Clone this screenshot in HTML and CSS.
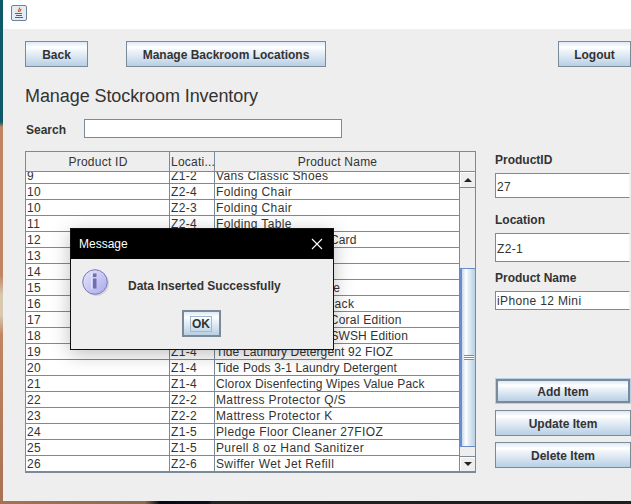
FILE: index.html
```html
<!DOCTYPE html>
<html lang="en">
<head>
<meta charset="utf-8">
<title>Manage Stockroom Inventory</title>
<link rel="stylesheet" href="styles.css">
</head>
<body>
<div class="window">
  <div class="titlebar">
    <svg class="java-icon" width="16" height="16" viewBox="0 0 16 16">
      <rect x="0.5" y="0.5" width="15" height="15" rx="1.5" fill="#e4ebf3" stroke="#6f8296"/>
      <path d="M8.500 2.500c1 1.500-2 2.500-1 4.500M10 4c0 1-1.500 1.500-1 3" fill="none" stroke="#d9541e" stroke-width="1.200"/>
      <path d="M4 8.500h7M5 10.500h6M4 12.500h8" stroke="#3d6a96" stroke-width="1"/>
    </svg>
  </div>
  <div class="content">
    <div class="topbar">
      <button class="btn btn-back">Back</button>
      <button class="btn btn-manage">Manage Backroom Locations</button>
      <button class="btn btn-logout">Logout</button>
    </div>
    <h1 class="heading">Manage Stockroom Inventory</h1>
    <div class="search">
      <label class="label search-label">Search</label>
      <div class="field search-field"></div>
    </div>
    <div class="workspace">
      <div class="table">
        <div class="table-main">
          <div class="thead">
            <div class="th col-id">Product ID</div>
            <div class="th col-loc">Locati...</div>
            <div class="th col-name">Product Name</div>
          </div>
          <div class="tbody">
            <div class="rows">
              <div class="row"><span class="col-id">9</span><span class="col-loc">Z1-2</span><span class="col-name">Vans Classic Shoes</span></div>
              <div class="row"><span class="col-id">10</span><span class="col-loc">Z2-4</span><span class="col-name">Folding Chair</span></div>
              <div class="row"><span class="col-id">10</span><span class="col-loc">Z2-3</span><span class="col-name">Folding Chair</span></div>
              <div class="row"><span class="col-id">11</span><span class="col-loc">Z2-4</span><span class="col-name">Folding Table</span></div>
              <div class="row"><span class="col-id">12</span><span class="col-loc">Z1-1</span><span class="col-name tight">Nintendo eShop Gift Card</span></div>
              <div class="row"><span class="col-id">13</span><span class="col-loc">Z1-1</span><span class="col-name">Nintendo Switch</span></div>
              <div class="row"><span class="col-id">14</span><span class="col-loc">Z1-1</span><span class="col-name">Nintendo Switch Lite</span></div>
              <div class="row"><span class="col-id">15</span><span class="col-loc">Z1-1</span><span class="col-name">Switch Lite Blue Case</span></div>
              <div class="row"><span class="col-id">16</span><span class="col-loc">Z1-1</span><span class="col-name">Joy-Con Controller Pack</span></div>
              <div class="row"><span class="col-id">17</span><span class="col-loc">Z1-1</span><span class="col-name snug">Switch Lite Console Coral Edition</span></div>
              <div class="row"><span class="col-id">18</span><span class="col-loc">Z1-1</span><span class="col-name tight">Switch Go Pokemon SWSH Edition</span></div>
              <div class="row"><span class="col-id">19</span><span class="col-loc">Z1-4</span><span class="col-name tight">Tide Laundry Detergent 92 FIOZ</span></div>
              <div class="row"><span class="col-id">20</span><span class="col-loc">Z1-4</span><span class="col-name tight">Tide Pods 3-1 Laundry Detergent</span></div>
              <div class="row"><span class="col-id">21</span><span class="col-loc">Z1-4</span><span class="col-name tight">Clorox Disenfecting Wipes Value Pack</span></div>
              <div class="row"><span class="col-id">22</span><span class="col-loc">Z2-2</span><span class="col-name">Mattress Protector Q/S</span></div>
              <div class="row"><span class="col-id">23</span><span class="col-loc">Z2-2</span><span class="col-name">Mattress Protector K</span></div>
              <div class="row"><span class="col-id">24</span><span class="col-loc">Z1-5</span><span class="col-name">Pledge Floor Cleaner 27FIOZ</span></div>
              <div class="row"><span class="col-id">25</span><span class="col-loc">Z1-5</span><span class="col-name">Purell 8 oz Hand Sanitizer</span></div>
              <div class="row"><span class="col-id">26</span><span class="col-loc">Z2-6</span><span class="col-name">Swiffer Wet Jet Refill</span></div>
            </div>
          </div>
        </div>
        <div class="scrollbar">
          <div class="scroll-corner"></div>
          <div class="scroll-btn"><span class="arrow-up"></span></div>
          <div class="scroll-track">
            <div class="scroll-thumb"><span class="grip"></span></div>
          </div>
          <div class="scroll-btn scroll-btn-down"><span class="arrow-down"></span></div>
        </div>
      </div>
      <div class="side">
        <label class="label side-label-id">ProductID</label>
        <div class="field field-id">27</div>
        <label class="label side-label-loc">Location</label>
        <div class="field field-loc">Z2-1</div>
        <label class="label side-label-name">Product Name</label>
        <div class="field field-name">iPhone 12 Mini</div>
        <button class="btn side-btn btn-add">Add Item</button>
        <button class="btn side-btn">Update Item</button>
        <button class="btn side-btn">Delete Item</button>
      </div>
    </div>
  </div>
</div>
<div class="taskbar"></div>
<div class="dialog">
  <div class="dialog-title">
    <span>Message</span>
    <svg class="dialog-close" width="12" height="12" viewBox="0 0 12 12">
      <path d="M1 1l10 10M11 1L1 11" stroke="#fff" stroke-width="1.100" fill="none"/>
    </svg>
  </div>
  <div class="dialog-body">
    <div class="dialog-msg">
      <svg class="info-icon" width="29" height="29" viewBox="0 0 29 29">
        <defs>
          <linearGradient id="infoFill" x1="0" y1="0" x2="1" y2="1">
            <stop offset="0" stop-color="#e6e6fb"/>
            <stop offset="1" stop-color="#a9a9ea"/>
          </linearGradient>
        </defs>
        <circle cx="14.500" cy="14.500" r="12.500" fill="#b9b9c9" opacity="0.500"/>
        <circle cx="13" cy="13" r="12.300" fill="url(#infoFill)" stroke="#7a7ab8" stroke-width="1"/>
        <rect x="10.500" y="4.500" width="4" height="3.500" fill="#6e6eb4"/>
        <rect x="10.500" y="9.500" width="4" height="10" fill="#6e6eb4"/>
        <path d="M10 4v4M10 9v11" stroke="#fff" stroke-width="1"/>
      </svg>
      <span class="dialog-text">Data Inserted Successfully</span>
    </div>
    <button class="btn btn-ok"><span class="ok-focus">OK</span></button>
  </div>
</div>
</body>
</html>
```
FILE: styles.css
```css
* { box-sizing: border-box; }
html, body { margin: 0; padding: 0; }
body {
  width: 631px;
  height: 504px;
  overflow: hidden;
  position: relative;
  font-family: "Liberation Sans", Arial, sans-serif;
  color: #333;
  background: linear-gradient(to bottom, #0f5a68 0, #0f5a68 122px, #c08562 127px, #c08562 275px, #d8c8b0 295px, #d8c8b0 315px, #c08562 335px, #a97252 100%);
}
.window { margin-left: 3px; width: 628px; height: 501px; background: #eee; }
.taskbar {
  height: 3px;
  background: linear-gradient(to right, #a8714f 0, #8f6a4c 145px, #06090f 160px, #0a1018 208px, #222 212px, #1d1d1d 100%);
}
.titlebar { height: 29px; background: #fff; padding: 5px 0 0 8px; }
.java-icon { display: block; }
.content { padding: 12px 0 0 22px; }
.topbar { display: flex; height: 26px; }
.btn {
  font: bold 12px "Liberation Sans", Arial, sans-serif;
  color: #333;
  border: 1px solid #7a8a99;
  background: linear-gradient(to bottom, #dde8f3 0, #fff 22%, #f0f5fa 35%, #b8cfe5 100%);
  padding: 2px 0 0;
  margin: 0;
}
.btn-back { width: 63px; }
.btn-manage { width: 200px; margin-left: 38px; }
.btn-logout { width: 73px; margin-left: auto; }
.heading { font-size: 18px; font-weight: normal; line-height: 22px; margin: 18px 0 0; letter-spacing: -0.08px; }
.search { display: flex; align-items: center; margin-top: 12px; height: 19px; }
.label { font-size: 12px; font-weight: bold; line-height: 14px; display: block; }
.search-label { width: 59px; padding-left: 1px; margin-top: 2px; }
.field {
  background: #fff;
  border: 1px solid #7a8a99;
  border-right-color: #f4f4f4;
  font-size: 12px;
  letter-spacing: 0.03em;
  display: flex;
  align-items: center;
  padding-left: 1px;
  width: 135px;
}
.search-field { width: 258px; height: 19px; border-right-color: #7a8a99; box-shadow: inset 1px 1px 0 #fff; }
.workspace { display: flex; margin-top: 13px; }
.table { display: flex; width: 451px; height: 322px; border: 1px solid #7a8a99; border-right: 0; border-bottom-width: 2px; }
.table-main { width: 434px; display: flex; flex-direction: column; border-right: 1px solid #7a8a99; }
.thead { display: flex; height: 20px; border-bottom: 1px solid #7a8a99; flex: none; }
.th { font-size: 12px; line-height: 20px; text-align: center; letter-spacing: 0.02em; padding-left: 3px; }
.col-id { width: 144px; flex: none; border-right: 1px solid #7a8a99; padding-left: 1px; }
.col-loc { width: 45px; flex: none; border-right: 1px solid #7a8a99; padding-left: 1px; white-space: nowrap; }
.col-name { flex: 1; padding-left: 1px; white-space: nowrap; overflow: hidden; }
.row .tight { letter-spacing: 0.13px; }
.row .snug { letter-spacing: 0.25px; }
.tbody { flex: 1; overflow: hidden; background: #fff; }
.rows { margin-top: -4px; }
.row { display: flex; height: 16px; border-bottom: 1px solid #7a8a99; font-size: 12px; line-height: 16px; letter-spacing: 0.03em; }
.scrollbar { width: 16px; display: flex; flex-direction: column; border-right: 1px solid #7a8a99; }
.scroll-corner { height: 20px; border-bottom: 1px solid #7a8a99; flex: none; }
.scroll-btn { height: 16px; flex: none; display: flex; align-items: center; justify-content: center; background: #eee; box-shadow: inset 1px 1px 0 #fff; border-bottom: 1px solid #7a8a99; }
.scroll-btn-down { height: 15px; border-top: 1px solid #7a8a99; border-bottom: 0; }
.arrow-up { width: 0; height: 0; border: 4px solid transparent; border-top: 0; border-bottom-color: #222; }
.arrow-down { width: 0; height: 0; border: 4px solid transparent; border-bottom: 0; border-top-color: #222; }
.scroll-track { flex: 1; padding-top: 80px; background: #eee; padding-bottom: 9px; }
.scroll-thumb {
  height: 100%;
  border: 1px solid #6a8cc7;
  border-right: 0;
  border-left-width: 2px;
  background: linear-gradient(to right, #c5d7ea 0, #fff 30%, #e6eef6 50%, #b8cfe5 100%);
  display: flex;
  align-items: center;
  justify-content: center;
}
.grip { width: 10px; height: 5px; border-top: 1px solid #6a8cc7; border-bottom: 1px solid #6a8cc7; box-shadow: inset 0 1px 0 #fff, inset 0 -1px 0 #fff; background: #6a8cc7; background-clip: content-box; }
.side { width: 136px; margin-left: 19px; display: flex; flex-direction: column; flex: none; }
.side-label-id { margin-top: 2px; }
.field-id { height: 25px; margin-top: 6px; padding-top: 2px; }
.side-label-loc { margin-top: 15px; }
.field-loc { height: 29px; margin-top: 6px; padding-top: 2px; }
.side-label-name { margin-top: 9px; }
.field-name { height: 19px; margin-top: 6px; padding-top: 1px; }
.side-btn { width: 136px; height: 26px; margin-top: 6px; }
.btn-add { width: 134px; height: 24px; margin: 69px 0 1px 1px; outline: 1px solid #b8cfe5; border-width: 2px; }
.dialog {
  position: absolute;
  left: 70px;
  top: 228px;
  width: 264px;
  height: 122px;
  border: 1px solid #111;
  background: #eee;
  box-shadow: 0 4px 18px rgba(0,0,0,0.25);
}
.dialog-title { height: 30px; background: #000; color: #fff; font-size: 12px; display: flex; align-items: center; justify-content: space-between; padding: 0 10px 0 8px; }
.dialog-body { display: flex; flex-direction: column; align-items: center; }
.dialog-msg { display: flex; align-items: center; width: 100%; padding: 7px 0 0 11px; height: 46px; }
.info-icon { flex: none; align-self: flex-start; margin-top: 3px; }
.dialog-text { font-size: 12px; font-weight: bold; margin-left: 17px; }
.btn-ok { width: 39px; height: 27px; margin: 5px 2px 0 0; padding: 0; border: 2px solid #7a8a99; display: flex; align-items: center; justify-content: center; }
.ok-focus { border: 1px solid #a3b8cc; padding: 0 1px; line-height: 14px; }
```
